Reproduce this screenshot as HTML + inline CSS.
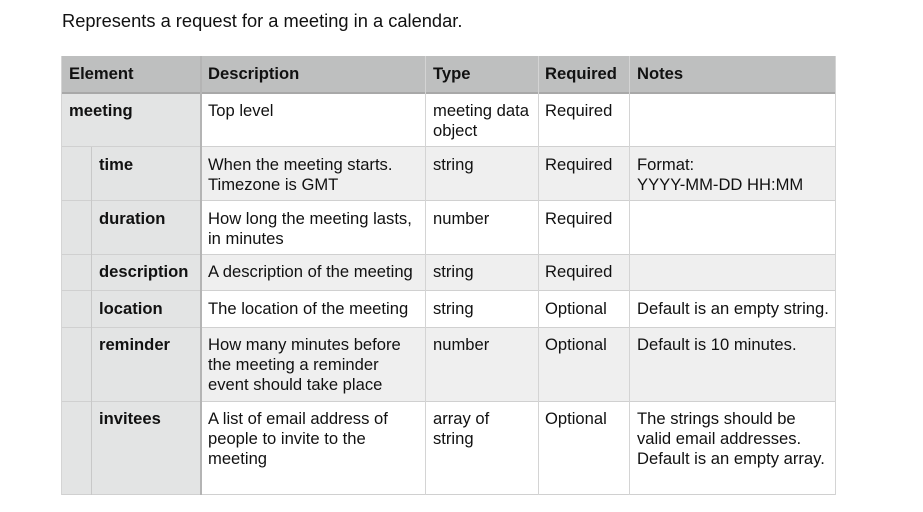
<!DOCTYPE html>
<html><head><style>
body{margin:0;width:923px;height:512px;background:#fff;font-family:"Liberation Sans",sans-serif;font-size:16.6px;color:#111;position:relative;overflow:hidden}
.t{position:absolute;line-height:20px;white-space:nowrap}
.b{font-weight:bold}
.r{position:absolute;left:61px;width:775px}
.v{position:absolute;width:1px;background:#d4d4d4}
.h{position:absolute;left:61px;width:775px;height:1px;background:#d0d0d0}
</style></head><body>
<div class="t" style="left:62px;top:11px;font-size:18.3px">Represents a request for a meeting in a calendar.</div>
<div class="r" style="top:56px;height:37px;background:#bebfbf"></div>
<div class="r" style="top:93px;height:54px;background:#fff"></div>
<div class="r" style="top:147px;height:53px;background:#efefef"></div>
<div class="r" style="top:200px;height:54px;background:#fff"></div>
<div class="r" style="top:254px;height:36px;background:#efefef"></div>
<div class="r" style="top:290px;height:37px;background:#fff"></div>
<div class="r" style="top:327px;height:74px;background:#efefef"></div>
<div class="r" style="top:401px;height:94px;background:#fff"></div>
<div style="position:absolute;left:61px;top:93px;width:139px;height:402px;background:#e3e4e4"></div>
<div class="h" style="top:92px;height:2px;background:#a8a8a8"></div>
<div class="h" style="top:146px"></div><div class="h" style="top:200px"></div>
<div class="h" style="top:254px"></div><div class="h" style="top:290px"></div>
<div class="h" style="top:327px"></div><div class="h" style="top:401px"></div>
<div class="h" style="top:494px"></div>
<div class="v" style="left:61px;top:56px;height:439px"></div>
<div class="v" style="left:91px;top:147px;height:348px;background:#c8c8c8"></div>
<div class="v" style="left:200px;top:56px;height:439px;width:2px;background:#b4b4b4"></div>
<div class="v" style="left:425px;top:56px;height:439px"></div>
<div class="v" style="left:538px;top:56px;height:439px"></div>
<div class="v" style="left:629px;top:56px;height:439px"></div>
<div class="v" style="left:835px;top:56px;height:439px"></div>

<div class="t b" style="left:69px;top:64px">Element</div>
<div class="t b" style="left:208px;top:64px">Description</div>
<div class="t b" style="left:433px;top:64px">Type</div>
<div class="t b" style="left:545px;top:64px">Required</div>
<div class="t b" style="left:637px;top:64px">Notes</div>

<div class="t b" style="left:69px;top:101px">meeting</div>
<div class="t" style="left:208px;top:101px">Top level</div>
<div class="t" style="left:433px;top:101px">meeting data<br>object</div>
<div class="t" style="left:545px;top:101px">Required</div>

<div class="t b" style="left:99px;top:155px">time</div>
<div class="t" style="left:208px;top:155px">When the meeting starts.<br>Timezone is GMT</div>
<div class="t" style="left:433px;top:155px">string</div>
<div class="t" style="left:545px;top:155px">Required</div>
<div class="t" style="left:637px;top:155px">Format:<br>YYYY-MM-DD HH:MM</div>

<div class="t b" style="left:99px;top:209px">duration</div>
<div class="t" style="left:208px;top:209px">How long the meeting lasts,<br>in minutes</div>
<div class="t" style="left:433px;top:209px">number</div>
<div class="t" style="left:545px;top:209px">Required</div>

<div class="t b" style="left:99px;top:262px">description</div>
<div class="t" style="left:208px;top:262px">A description of the meeting</div>
<div class="t" style="left:433px;top:262px">string</div>
<div class="t" style="left:545px;top:262px">Required</div>

<div class="t b" style="left:99px;top:299px">location</div>
<div class="t" style="left:208px;top:299px">The location of the meeting</div>
<div class="t" style="left:433px;top:299px">string</div>
<div class="t" style="left:545px;top:299px">Optional</div>
<div class="t" style="left:637px;top:299px">Default is an empty string.</div>

<div class="t b" style="left:99px;top:335px">reminder</div>
<div class="t" style="left:208px;top:335px">How many minutes before<br>the meeting a reminder<br>event should take place</div>
<div class="t" style="left:433px;top:335px">number</div>
<div class="t" style="left:545px;top:335px">Optional</div>
<div class="t" style="left:637px;top:335px">Default is 10 minutes.</div>

<div class="t b" style="left:99px;top:409px">invitees</div>
<div class="t" style="left:208px;top:409px">A list of email address of<br>people to invite to the<br>meeting</div>
<div class="t" style="left:433px;top:409px">array of<br>string</div>
<div class="t" style="left:545px;top:409px">Optional</div>
<div class="t" style="left:637px;top:409px">The strings should be<br>valid email addresses.<br>Default is an empty array.</div>
</body></html>
